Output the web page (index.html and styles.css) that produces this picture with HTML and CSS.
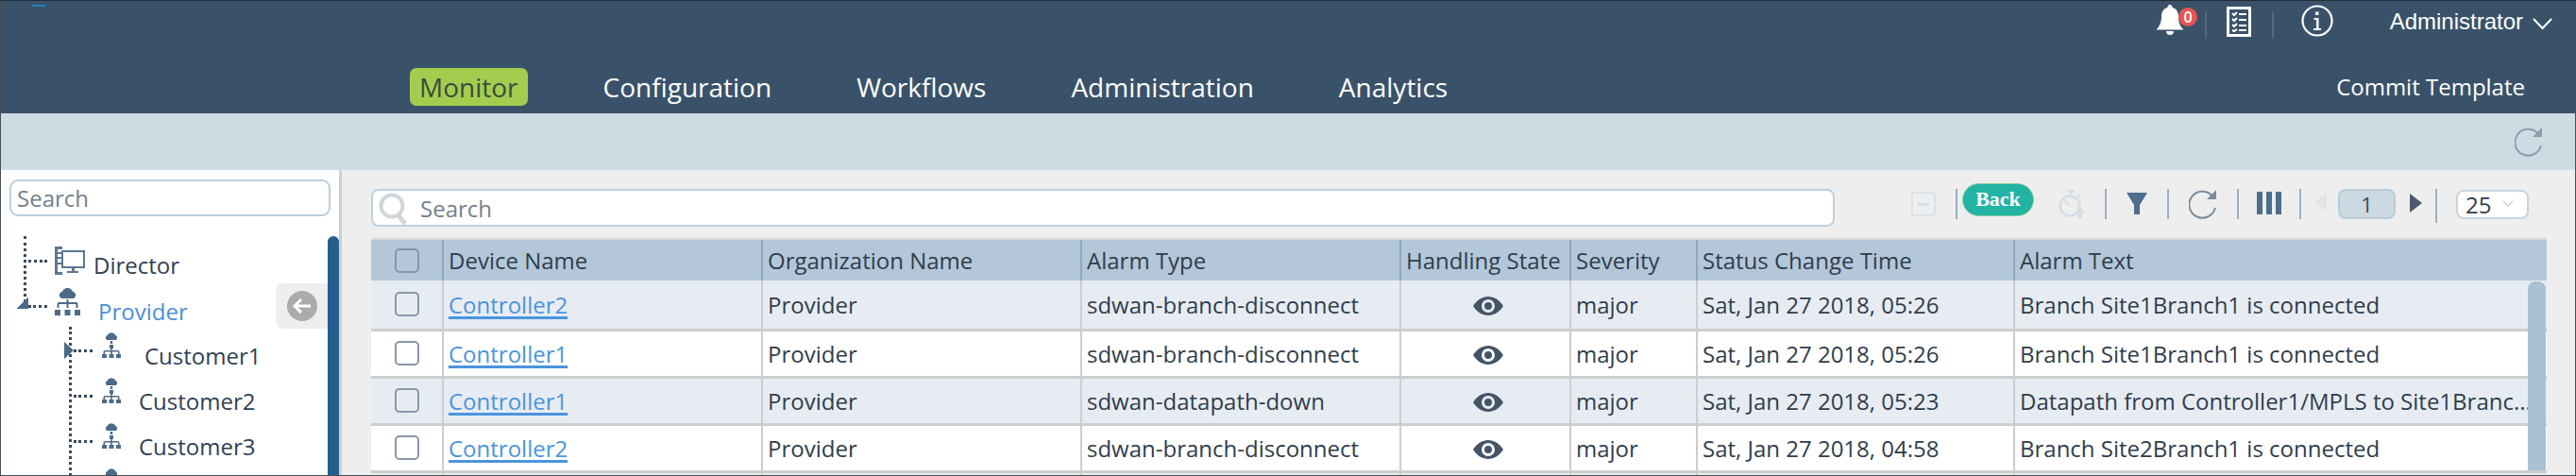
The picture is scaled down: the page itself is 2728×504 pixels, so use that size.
FILE: index.html
```html
<!DOCTYPE html>
<html lang="en">
<head>
<meta charset="utf-8">
<title>Monitor - Alarms</title>
<link rel="stylesheet" href="styles.css">
</head>
<body>
<svg class="defs" width="0" height="0" aria-hidden="true">
  <symbol id="org" viewBox="0 0 27 30">
    <path d="M7 11a4 4 0 0 1 1-7.500a6 6 0 0 1 11 0a4 4 0 0 1 1 7.500z" fill="currentColor"/>
    <path d="M12.500 12h2v3h8a2 2 0 0 1 2 2v4h-2v-4h-8v4h-2v-4h-8v4h-2v-4a2 2 0 0 1 2-2h8z" fill="currentColor"/>
    <path d="M0 23h6v6H0zM10.500 23h6v6h-6zM21 23h6v6h-6z" fill="currentColor"/>
  </symbol>
  <symbol id="cust" viewBox="0 0 20 30">
    <path d="M5 8a3 3 0 0 1 .5-5a5 5 0 0 1 9 0a3 3 0 0 1 .5 5z" fill="currentColor"/>
    <path d="M8.800 9h2.400v3H8.800zM8 13h4v4H8z" fill="currentColor"/>
    <path d="M9.200 17h1.600v2H17a1.500 1.500 0 0 1 1.500 1.500V23h-1.500v-2.500h-6.200V23H9.200v-2.500H3V23H1.500v-2.500A1.500 1.500 0 0 1 3 19h6.200z" fill="currentColor"/>
    <path d="M0 23h5v4H0zM7.500 23h5v4h-5zM15 23h5v4h-5z" fill="currentColor"/>
  </symbol>
  <symbol id="eye" viewBox="0 0 32 20">
    <path fill-rule="evenodd" d="M0 10C4 3.500 10 0 16 0s12 3.500 16 10c-4 6.500-10 10-16 10S4 16.500 0 10zm16-7a7 7 0 1 0 0 14 7 7 0 0 0 0-14zm0 3a4 4 0 1 1 0 8 4 4 0 0 1 0-8z" fill="currentColor"/>
  </symbol>
  <symbol id="reload" viewBox="0 0 30 32">
    <path d="M24 6.500A14 14 0 1 0 28 20" fill="none" stroke="currentColor" stroke-width="2"/>
    <path d="M29 1v10H19z" fill="currentColor"/>
  </symbol>
  <symbol id="mag" viewBox="0 0 32 36">
    <circle cx="14" cy="14" r="11.500" fill="none" stroke="currentColor" stroke-width="4"/>
    <path d="M21 24l7 9" stroke="currentColor" stroke-width="5"/>
  </symbol>
</svg>

<div class="app">
  <header class="topbar">
    <i class="logo-mark"></i>
    <div class="utility">
      <span class="bell">
        <svg width="30" height="33" viewBox="0 0 29 33"><path d="M14.500 0a2.500 2.500 0 0 1 2.500 3c4.500 1.200 6.500 5 6.500 9.500 0 6 1.500 10 5.500 14H0c4-4.500 5.500-8.500 5.500-14C5.500 8 7.500 4.200 12 3a2.500 2.500 0 0 1 2.500-3zM10.500 28h8a4 4 0 0 1-8 0z" fill="#fff"/></svg>
        <b class="badge">0</b>
      </span>
      <i class="util-sep"></i>
      <svg class="checklist" width="26" height="32" viewBox="0 0 26 32"><path fill-rule="evenodd" d="M0 0h26v32H0zM3 3v26h20V3z" fill="#fff"/><path d="M6 7l2 2 3-3M13 8h8M6 13l2 2 3-3M13 14h8M6 19l2 2 3-3M13 20h8M6 25l2 1 3-2M13 25h8" fill="none" stroke="#fff" stroke-width="2"/></svg>
      <i class="util-sep wide"></i>
      <svg class="info" width="34" height="34" viewBox="0 0 34 34"><circle cx="17" cy="17" r="15.500" fill="none" stroke="#fff" stroke-width="2.200"/><path d="M15 7.500h3.500v3.500H15zM13.500 14h5v11h2.500v2h-8v-2H16v-9h-2.500z" fill="#fff"/></svg>
      <span class="user">Administrator</span>
      <svg class="chev" width="21" height="13" viewBox="0 0 21 13"><path d="M1 1l9.500 10L20 1" fill="none" stroke="#fff" stroke-width="2"/></svg>
    </div>
    <nav class="mainnav">
      <a class="navitem active">Monitor</a>
      <a class="navitem">Configuration</a>
      <a class="navitem">Workflows</a>
      <a class="navitem">Administration</a>
      <a class="navitem">Analytics</a>
      <a class="commit">Commit Template</a>
    </nav>
  </header>

  <div class="subbar">
    <svg class="sub-reload"><use href="#reload"/></svg>
  </div>

  <div class="workspace">
    <aside class="sidebar">
      <div class="tree-search">Search</div>
      <ul class="tree">
        <li class="node root first">
          <i class="dash"></i>
          <svg class="ic-director" width="32" height="32" viewBox="0 0 32 32"><path d="M0 1h8v3H3v3h5v2H3v3h5v2H3v4h5v2H3v8h5v3H0z" fill="#5b7792"/><path d="M8 6h23v17H8z" fill="none" stroke="#5b7792" stroke-width="2"/><path d="M18 23h3v4h4v2H13v-2h5z" fill="#5b7792"/></svg>
          <span class="label director">Director</span>
        </li>
        <li class="node root open">
          <i class="vline"></i>
          <i class="corner"></i>
          <i class="dash"></i>
          <svg class="ic-org"><use href="#org"/></svg>
          <span class="label provider">Provider</span>
          <button class="collapse"><span class="circle"><svg width="20" height="16" viewBox="0 0 20 16"><path d="M9 1L2 8l7 7M2 8h17" fill="none" stroke="#fff" stroke-width="3"/></svg></span></button>
        </li>
        <li class="node child">
          <i class="tri"></i>
          <i class="dash"></i>
          <svg class="ic-cust"><use href="#cust"/></svg>
          <span class="label shifted">Customer1</span>
        </li>
        <li class="node child">
          <i class="dash"></i>
          <svg class="ic-cust"><use href="#cust"/></svg>
          <span class="label">Customer2</span>
        </li>
        <li class="node child">
          <i class="dash"></i>
          <svg class="ic-cust"><use href="#cust"/></svg>
          <span class="label">Customer3</span>
        </li>
        <li class="node child">
          <i class="dash"></i>
          <svg class="ic-cust"><use href="#cust"/></svg>
        </li>
      </ul>
      <i class="side-scroll"></i>
    </aside>

    <main class="content">
      <div class="toolbar">
        <div class="main-search">
          <svg class="mag"><use href="#mag"/></svg>
          <span>Search</span>
        </div>
        <div class="tools">
          <span class="minus"><i></i></span>
          <i class="sep"></i>
          <button class="back">Back</button>
          <svg class="timer" width="28" height="30" viewBox="0 0 28 30"><path d="M9 1h8M13 1v4M20 5l3 3" fill="none" stroke="#d4dee7" stroke-width="2.500"/><circle cx="12" cy="17" r="10.500" fill="none" stroke="#d4dee7" stroke-width="2.500"/><path d="M12 17L6 11" stroke="#d4dee7" stroke-width="2"/><path d="M23 18l5 6h-3v6h-4v-6h-3z" fill="#d4dee7"/></svg>
          <i class="sep"></i>
          <svg class="funnel" width="22" height="23" viewBox="0 0 22 23"><path d="M0 0h22l-8 13v10H8V13z" fill="#4d6e8c"/></svg>
          <i class="sep"></i>
          <svg class="tool-reload"><use href="#reload"/></svg>
          <i class="sep"></i>
          <svg class="cols" width="26" height="24" viewBox="0 0 26 24"><path d="M0 0h6v24H0zM10 0h6v24h-6zM20 0h6v24h-6z" fill="#4d6e8c"/></svg>
          <i class="sep"></i>
          <i class="prev"></i>
          <span class="page">1</span>
          <i class="next"></i>
          <i class="sep tall"></i>
          <span class="size">25<svg width="12" height="8" viewBox="0 0 12 8"><path d="M1 1l5 5 5-5" fill="none" stroke="#c5ced6" stroke-width="1.300"/></svg></span>
        </div>
      </div>

      <div class="grid-wrap">
        <table class="grid">
          <colgroup>
            <col class="c1"><col class="c2"><col class="c2"><col class="c2"><col class="c5"><col class="c6"><col class="c7"><col>
          </colgroup>
          <thead>
            <tr>
              <th class="chk"><i class="box"></i></th>
              <th>Device Name</th>
              <th>Organization Name</th>
              <th>Alarm Type</th>
              <th>Handling State</th>
              <th>Severity</th>
              <th>Status Change Time</th>
              <th>Alarm Text</th>
            </tr>
          </thead>
          <tbody>
            <tr>
              <td class="chk"><i class="box"></i></td>
              <td><a class="link">Controller2</a></td>
              <td>Provider</td>
              <td>sdwan-branch-disconnect</td>
              <td class="state"><svg class="eye"><use href="#eye"/></svg></td>
              <td>major</td>
              <td>Sat, Jan 27 2018, 05:26</td>
              <td>Branch Site1Branch1 is connected</td>
            </tr>
            <tr>
              <td class="chk"><i class="box"></i></td>
              <td><a class="link">Controller1</a></td>
              <td>Provider</td>
              <td>sdwan-branch-disconnect</td>
              <td class="state"><svg class="eye"><use href="#eye"/></svg></td>
              <td>major</td>
              <td>Sat, Jan 27 2018, 05:26</td>
              <td>Branch Site1Branch1 is connected</td>
            </tr>
            <tr>
              <td class="chk"><i class="box"></i></td>
              <td><a class="link">Controller1</a></td>
              <td>Provider</td>
              <td>sdwan-datapath-down</td>
              <td class="state"><svg class="eye"><use href="#eye"/></svg></td>
              <td>major</td>
              <td>Sat, Jan 27 2018, 05:23</td>
              <td>Datapath from Controller1/MPLS to Site1Branc...</td>
            </tr>
            <tr>
              <td class="chk"><i class="box"></i></td>
              <td><a class="link">Controller2</a></td>
              <td>Provider</td>
              <td>sdwan-branch-disconnect</td>
              <td class="state"><svg class="eye"><use href="#eye"/></svg></td>
              <td>major</td>
              <td>Sat, Jan 27 2018, 04:58</td>
              <td>Branch Site2Branch1 is connected</td>
            </tr>
            <tr class="partial">
              <td></td><td></td><td></td><td></td><td></td><td></td><td></td><td></td>
            </tr>
          </tbody>
        </table>
        <i class="grid-scroll"></i>
      </div>
    </main>
  </div>
</div>
</body>
</html>
```

FILE: styles.css
```css
* { box-sizing: border-box; }
html, body { margin: 0; padding: 0; height: 100%; overflow: hidden; }
body { font-family: "Open Sans", "Liberation Sans", sans-serif; color: #2f3d4c; background: #fff; }
i { display: block; font-style: normal; }
.defs { position: absolute; }
svg { display: block; flex: none; }

.app {
  width: 2728px;
  height: 504px;
  border: 1px solid #4a4f55;
  border-top-color: #1f2c38;
  display: flex;
  flex-direction: column;
  overflow: hidden;
}

/* header */
.topbar {
  position: relative;
  height: 119px;
  flex: none;
  background: #3a5269;
  color: #fff;
  display: flex;
  flex-direction: column;
  justify-content: space-between;
}
.logo-mark { position: absolute; left: 33px; top: 4px; width: 14px; height: 2px; background: #1f7fc4; }

.utility {
  display: flex;
  align-items: center;
  height: 40px;
  padding: 0 24px 0 2282px;
}
.bell { position: relative; display: block; height: 33px; width: 29px; margin-top: 0; }
.badge {
  position: absolute;
  left: 24px;
  top: 3px;
  width: 20px;
  height: 20px;
  border-radius: 50%;
  background: #e85454;
  color: #fff;
  font-size: 16px;
  line-height: 20px;
  font-weight: 600;
  text-align: center;
}
.util-sep { width: 2px; height: 28px; margin: 12px 21px 0 23px; background: #55697d; }
.util-sep.wide { margin: 12px 29px 0 22px; }
.checklist { margin-top: 4px; }
.info { margin-top: 2px; }
.user { font-family: "Liberation Sans", sans-serif; font-size: 24px; margin-left: 60px; line-height: 32px; margin-top: 4px; }
.chev { margin-left: 10px; margin-top: 9px; }

.mainnav {
  display: flex;
  align-items: center;
  height: 40px;
  margin-bottom: 8px;
  padding-left: 433px;
  font-size: 28px;
  line-height: 40px;
}
.navitem { margin-right: 90px; white-space: nowrap; }
.navitem.active {
  background: #a4cd50;
  color: #3a4c3a;
  border-radius: 7px;
  padding: 0 10px;
  margin-right: 80px;
}
.commit { margin-left: auto; margin-right: 53px; font-size: 24px; }

/* sub bar */
.subbar {
  height: 60px;
  flex: none;
  background: #cfdbe3;
  display: flex;
  justify-content: flex-end;
  align-items: center;
  padding-right: 34px;
}
.sub-reload { width: 30px; height: 32px; color: #8e9cad; }

/* workspace */
.workspace { flex: 1; display: flex; min-height: 0; }

.sidebar {
  position: relative;
  width: 361px;
  flex: none;
  background: #fff;
  border-right: 3px solid #cfcfcf;
  padding: 10px 0 0 9px;
}
.tree-search {
  width: 340px;
  height: 39px;
  border: 2px solid #b9cfe0;
  border-radius: 9px;
  padding-left: 6px;
  font-size: 24px;
  line-height: 36px;
  color: #75808c;
}
.tree { list-style: none; margin: 22px 0 0; padding: 0; }

.node {
  position: relative;
  height: 48px;
  display: flex;
  font-size: 24px;
  color: #2f4155;
}
.dash { position: absolute; height: 0; border-top: 3px dotted #3a4a5a; }
.root.first { height: 45px; }
.root.first .dash { left: 15px; width: 25px; top: 24px; }
.root.first::before {
  content: "";
  position: absolute;
  left: 15px;
  top: -1px;
  height: 70px;
  border-left: 3px dotted #3a4a5a;
}
.root.open { height: 49px; }
.root.open .dash { left: 20px; width: 20px; top: 27px; }
.vline { position: absolute; left: 63px; top: 50px; height: 200px; border-left: 3px dotted #3a4a5a; }
.corner {
  position: absolute;
  left: 8px;
  top: 19px;
  width: 12px;
  height: 12px;
  background: linear-gradient(135deg, transparent 50%, #4b6a87 50%);
}
.ic-director { margin: 9px 0 0 48px; }
.label { line-height: 32px; white-space: nowrap; }
.director { margin: 14px 0 0 9px; }
.ic-org { width: 27px; height: 30px; margin: 9px 0 0 48px; color: #4d6b88; }
.provider { margin: 18px 0 0 19px; color: #4b8fd9; }

.child .dash { left: 68px; width: 20px; top: 25px; }
.tri {
  position: absolute;
  left: 58px;
  top: 17px;
  width: 0;
  height: 0;
  border-left: 10px solid #4b6a87;
  border-top: 9px solid transparent;
  border-bottom: 9px solid transparent;
}
.ic-cust { width: 20px; height: 30px; margin: 7px 0 0 98px; color: #4d6b88; }
.child .label { margin: 16px 0 0 19px; }
.child .label.shifted { margin-left: 25px; }

.collapse {
  position: absolute;
  left: 282px;
  top: 4px;
  width: 56px;
  height: 48px;
  border: 0;
  padding: 0 0 0 12px;
  background: #eee;
  border-radius: 8px 0 0 8px;
  display: flex;
  align-items: center;
}
.circle {
  width: 32px;
  height: 32px;
  border-radius: 50%;
  background: #ababab;
  display: flex;
  align-items: center;
  justify-content: center;
}
.side-scroll {
  position: absolute;
  right: 0;
  top: 70px;
  bottom: 0;
  width: 12px;
  background: #255f8f;
  border-radius: 6px 6px 0 0;
}

/* content */
.content { flex: 1; min-width: 0; background: #eeeeee; padding: 0 29px 0 31px; }
.toolbar { display: flex; height: 72px; position: relative; }
.main-search {
  width: 1550px;
  height: 40px;
  margin-top: 20px;
  background: #fff;
  border: 2px solid #bcd0e0;
  border-radius: 8px;
  display: flex;
  align-items: center;
  padding-left: 6px;
  font-size: 24px;
  color: #75808c;
}
.mag { width: 32px; height: 36px; margin: 3px 12px 0 0; color: #cfd6dc; }
.tools { display: flex; align-items: center; margin-left: 81px; height: 60px; padding-top: 12px; }
.sep { width: 2px; height: 32px; background: #9bb0c3; flex: none; }
.sep.tall { height: 36px; margin-top: 3px; margin-left: 14px; }
.minus {
  width: 26px;
  height: 26px;
  border: 2px solid #d9e3ec;
  border-radius: 4px;
  display: flex;
  align-items: center;
  justify-content: center;
  margin-right: 21px;
}
.minus i { width: 12px; height: 3px; background: #d4dee7; }
.back {
  width: 76px;
  height: 35px;
  margin: -10px 0 0 5px;
  border: 1px solid #8ed09c;
  border-radius: 18px;
  background: #22b3a4;
  color: #fff;
  font-family: "Liberation Serif", serif;
  font-weight: 700;
  font-size: 22px;
  padding: 0;
}
.timer { margin: 0 21px 0 26px; }
.funnel { margin: -2px 21px 0 21px; }
.tool-reload { width: 30px; height: 32px; margin: 0 21px 0 21px; color: #7a8c9f; }
.cols { margin: -2px 19px 0 19px; }
.prev {
  width: 0; height: 0;
  margin: -4px 12px 0 14px;
  border-right: 13px solid #dfe4e9;
  border-top: 10px solid transparent;
  border-bottom: 10px solid transparent;
}
.page {
  width: 61px;
  height: 32px;
  background: #cbd9e3;
  border: 2px solid #b7cbdb;
  border-radius: 8px;
  text-align: center;
  font-size: 22px;
  line-height: 28px;
  color: #3a4a5a;
}
.next {
  width: 0; height: 0;
  margin: -2px 0 0 15px;
  border-left: 13px solid #4a5a6c;
  border-top: 10px solid transparent;
  border-bottom: 10px solid transparent;
}
.size {
  width: 77px;
  height: 31px;
  margin-left: 20px;
  background: #fff;
  border: 2px solid #c4d5e2;
  border-radius: 8px;
  display: flex;
  align-items: center;
  justify-content: space-between;
  padding: 0 14px 0 8px;
  font-size: 24px;
  color: #2f3d4c;
}

/* table */
.grid-wrap { position: relative; width: 2304px; }
.grid {
  width: 2304px;
  table-layout: fixed;
  border-collapse: collapse;
  font-size: 24px;
}
.c1 { width: 76px; }
.c2 { width: 338px; }
.c5 { width: 180px; }
.c6 { width: 134px; }
.c7 { width: 336px; }
.grid th, .grid td {
  padding: 0 0 0 5px;
  text-align: left;
  font-weight: 400;
  white-space: nowrap;
  color: #2f3d4c;
}
.grid th {
  height: 44px;
  background: #b3c7d9;
  border-left: 2px solid #8ea7bd;
  border-top: 2px solid #d6d9dc;
}
.grid th:first-child, .grid td:first-child { border-left: 0; }
.grid tbody tr { height: 50px; }
.grid tbody tr:first-child { height: 52px; }
.grid td {
  border-left: 2px solid #cdcdcd;
  border-bottom: 3px solid #cdcdcd;
  background: #fff;
}
.grid tbody tr:nth-child(odd) td { background: #e7ecf3; }
.grid .chk { padding: 0 0 0 25px; }
.box { width: 26px; height: 26px; border: 2px solid #8a95a8; border-radius: 5px; }
.link {
  color: #4b94dd;
  text-decoration: underline;
  text-decoration-thickness: 2.5px;
  text-decoration-skip-ink: none;
  text-underline-offset: 3px;
}
.eye { width: 32px; height: 20px; margin: 4px 0 0 71px; color: #445568; }
.grid-scroll {
  position: absolute;
  right: 1px;
  top: 46px;
  width: 19px;
  height: 200px;
  background: #a9c0d5;
  border-radius: 8px 8px 0 0;
}
```
